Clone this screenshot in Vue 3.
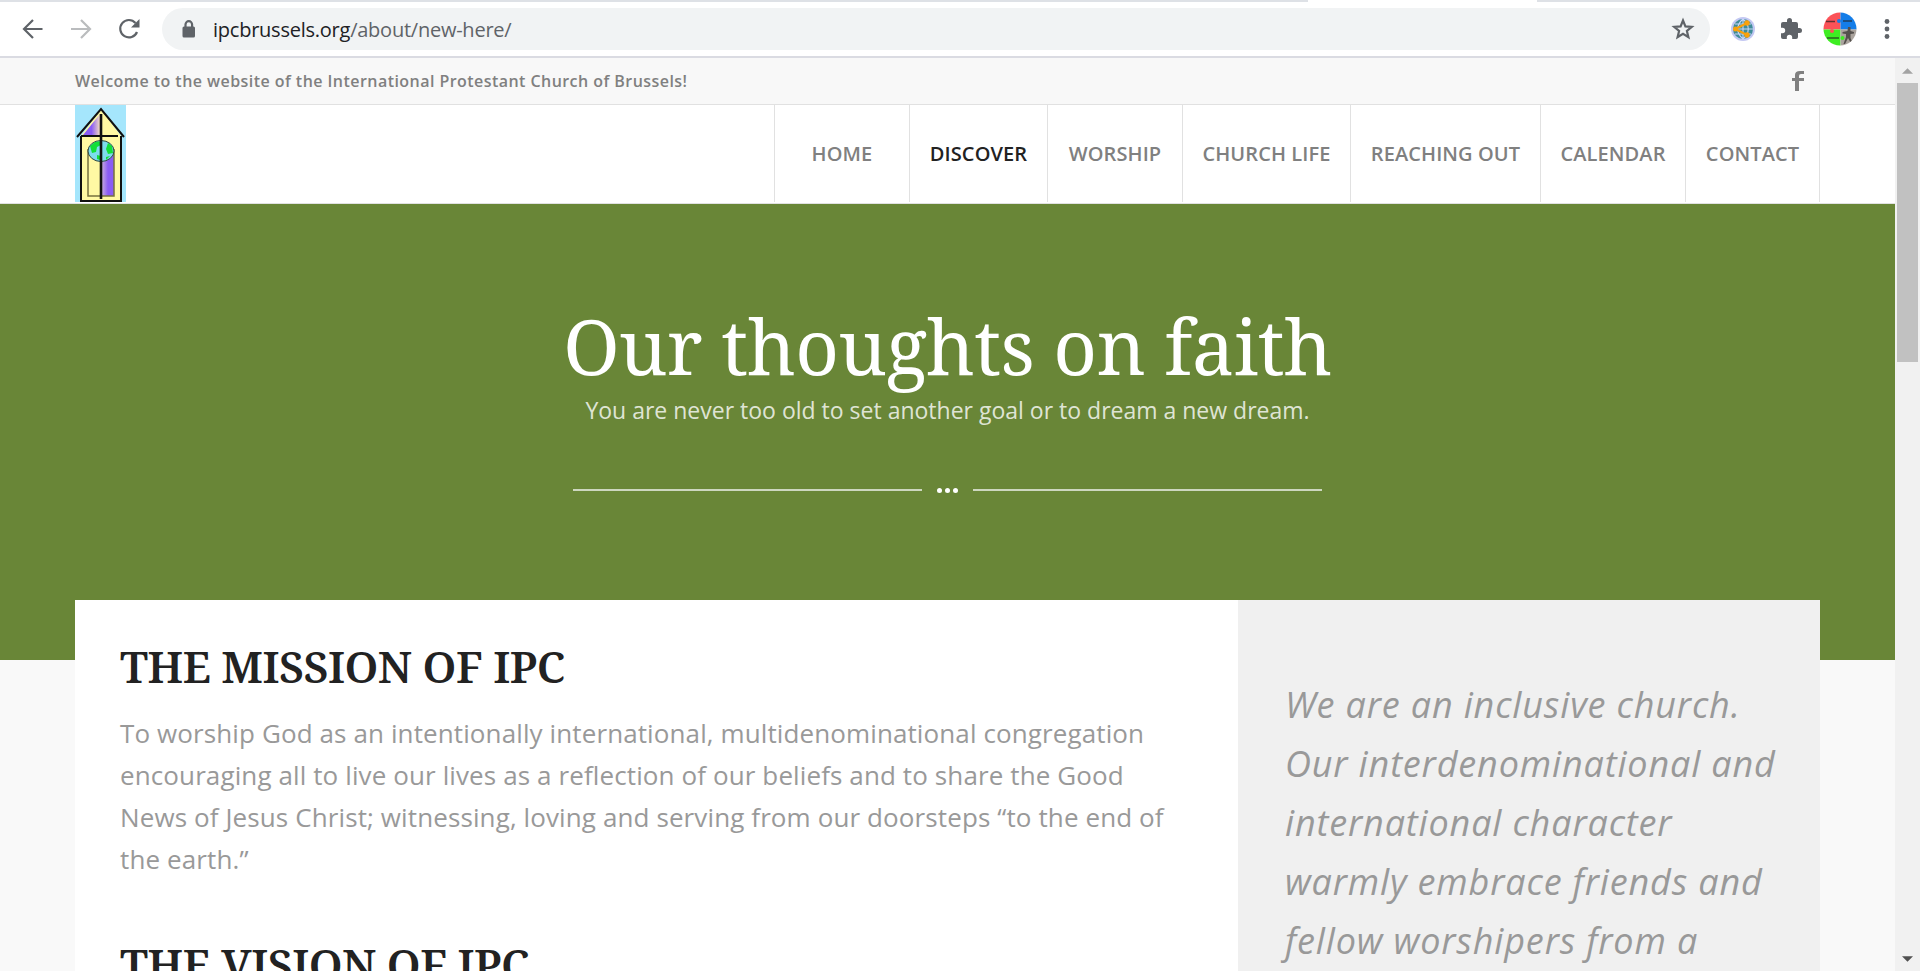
<template>
  <div class="browser">
    <div class="tabstrip">
      <div class="tabstrip__active"></div>
    </div>

    <div class="toolbar">
      <svg class="toolbar__back" viewBox="0 0 22 22"><path d="M20.500 11H2.500M11 2L2 11l9 9" /></svg>
      <svg class="toolbar__forward" viewBox="0 0 22 22"><path d="M1 11h18.500M11 2l9 9-9 9" /></svg>
      <svg class="toolbar__reload" viewBox="0 0 22 22">
        <path d="M19 14A8.700 8.700 0 1 1 17.500 5" />
        <path class="solid" d="M21.500 1v8.500H13z" />
      </svg>
      <div class="address">
        <svg class="address__lock" viewBox="0 0 14 18">
          <path class="solid" d="M2 6.500h9.500A1.500 1.500 0 0 1 13 8v8a1.500 1.500 0 0 1-1.500 1.500H2A1.500 1.500 0 0 1 .5 16V8A1.500 1.500 0 0 1 2 6.500z" />
          <path d="M3.500 8V4.500a3.300 3.300 0 0 1 6.600 0V8" />
        </svg>
        <span class="address__url"><b>ipcbrussels.org</b>/about/new-here/</span>
        <svg class="address__star" viewBox="0 0 24 24">
          <path d="M12 3.500l2.400 5.900 6.400.5-4.900 4.100 1.500 6.200L12 16.900l-5.400 3.300 1.500-6.200-4.900-4.100 6.400-.5z" />
        </svg>
      </div>
      <svg class="toolbar__globe" viewBox="0 0 24 24">
        <circle cx="12" cy="12" r="12" fill="#c3c8f3" />
        <circle cx="12" cy="12" r="10" fill="#3f8d98" />
        <path d="M12 2v20M2 12h20M4 7h16M4 17h16M12 2c-7 6-7 14 0 20M12 2c7 6 7 14 0 20" fill="none" stroke="#c9d6f8" stroke-width="1.100" />
        <path d="M16 6L4.500 12 16 18" fill="none" stroke="#f9a10c" stroke-width="2.200" />
        <circle cx="16" cy="6" r="2.700" fill="#f9a10c" />
        <circle cx="4.500" cy="12" r="2.500" fill="#f9a10c" />
        <circle cx="16" cy="18" r="2.700" fill="#f9a10c" />
      </svg>
      <svg class="toolbar__puzzle" viewBox="0 0 24 24">
        <path d="M20.500 11H19V7a2 2 0 0 0-2-2h-4V3.500a2.500 2.500 0 0 0-5 0V5H4a2 2 0 0 0-2 2v3.800h1.500a2.700 2.700 0 0 1 0 5.400H2V20a2 2 0 0 0 2 2h3.800v-1.500a2.700 2.700 0 0 1 5.400 0V22H17a2 2 0 0 0 2-2v-4h1.500a2.500 2.500 0 0 0 0-5z" />
      </svg>
      <svg class="toolbar__avatar" viewBox="0 0 34 34">
        <clipPath id="round"><circle cx="17" cy="17" r="16.500" /></clipPath>
        <g clip-path="url(#round)">
          <path d="M0 0h17.500v17.500H0z" fill="#fb5258" />
          <path d="M17.500 0H34v17.500H17.500z" fill="#147de8" />
          <path d="M0 17.500h17.500V34H0z" fill="#3eed22" />
          <path d="M17.500 17.500H34V34H17.500z" fill="#aaa39d" />
          <path d="M25 15h2.500v4l3.500 1v1.500l-3.500.5v4l2.500 6h-1.500l-3.500-6-3 6h-1.500l2.500-7v-3l-3.500-.5V20l5-1z" fill="#54504d" />
          <path d="M3 9.500h9M20 9h9M4 26h12" stroke="#222" stroke-opacity=".7" stroke-width="1.400" />
          <circle cx="9" cy="19" r="2" fill="#fb5258" />
          <circle cx="16" cy="9" r="2" fill="#147de8" />
          <circle cx="19.500" cy="26" r="2" fill="#3eed22" />
        </g>
      </svg>
      <svg class="toolbar__menu" viewBox="0 0 6 22">
        <circle cx="3" cy="3.500" r="2.400" />
        <circle cx="3" cy="11" r="2.400" />
        <circle cx="3" cy="18.500" r="2.400" />
      </svg>
    </div>

    <div class="viewport">
      <div class="page">
        <div class="welcome">
          <span>Welcome to the website of the International Protestant Church of Brussels!</span>
          <svg class="welcome__facebook" viewBox="0 0 12 20"><path d="M3 20V10H0V7h3V4q0-4 5-4h4v3H9Q7 3 7 5v2h5v3H7v10z" /></svg>
        </div>

        <header class="header">
          <svg class="header__logo" viewBox="0 0 51 97">
            <defs>
              <linearGradient id="roof"><stop offset=".5" stop-color="#8a5cf5" /><stop offset="1" stop-color="#f5dec0" /></linearGradient>
              <linearGradient id="door"><stop offset="0" stop-color="#c4a8df" /><stop offset=".5" stop-color="#8a5cf5" /></linearGradient>
            </defs>
            <path d="M0 0h51v97H0z" fill="#a5e6fc" />
            <path d="M6 31L26 4l20 27v65H6z" fill="#fff9a3" />
            <path d="M8 30L25 9v21z" fill="url(#roof)" />
            <path d="M27 45h12v46H27z" fill="url(#door)" />
            <path d="M13 44v47h26V44" fill="none" stroke="#77723f" stroke-width="1.500" />
            <ellipse cx="26" cy="46" rx="13" ry="10.500" fill="#7ddcec" stroke="#31483f" />
            <path d="M15 41l5-4 7-1-1 4-4 2-1 5-4 1zM33 38l4 3 1 7-5 1-2-5zM22 50l4 1-1 4-3-1zM31 52l4-1-4 4z" fill="#12df38" />
            <path d="M2 32L26 4l23 28M6 31h37M6 31v65h40V31" fill="none" stroke="#111" stroke-width="2" />
            <path d="M26 9v85" stroke="#111" stroke-width="2.600" />
          </svg>
          <nav class="nav">
            <a
              v-for="item in navItems"
              :key="item.label"
              class="nav__item"
              :class="{ 'nav__item--active': item.active }"
              :style="{ width: `${item.width}px` }"
            >{{ item.label }}</a>
          </nav>
        </header>

        <section class="hero">
          <h1 class="hero__title">Our thoughts on faith</h1>
          <p class="hero__subtitle">You are never too old to set another goal or to dream a new dream.</p>
          <div class="divider">
            <span class="divider__line"></span>
            <span class="divider__dots"><i></i><i></i><i></i></span>
            <span class="divider__line"></span>
          </div>
        </section>

        <main class="content">
          <article class="content__main">
            <h2>THE MISSION OF IPC</h2>
            <p>
              <span v-for="line in missionLines" :key="line">{{ line }}</span>
            </p>
            <h2>THE VISION OF IPC</h2>
          </article>
          <aside class="content__aside">
            <span v-for="line in asideLines" :key="line">{{ line }}</span>
          </aside>
        </main>
      </div>

      <div class="scrollbar">
        <svg class="scrollbar__arrow scrollbar__arrow--up" viewBox="0 0 12 6"><path d="M6 0l6 6H0z" /></svg>
        <div class="scrollbar__thumb"></div>
        <svg class="scrollbar__arrow scrollbar__arrow--down" viewBox="0 0 12 6"><path d="M0 0h12L6 6z" /></svg>
      </div>
    </div>
  </div>
</template>

<script setup>
  // width: 每个菜单项连同右侧分隔线的宽度。
  const navItems = [
    { label: 'HOME', width: 135 },
    { label: 'DISCOVER', width: 138, active: true },
    { label: 'WORSHIP', width: 135 },
    { label: 'CHURCH LIFE', width: 168 },
    { label: 'REACHING OUT', width: 190 },
    { label: 'CALENDAR', width: 145 },
    { label: 'CONTACT', width: 134 }
  ]

  const missionLines = [
    'To worship God as an intentionally international, multidenominational congregation',
    'encouraging all to live our lives as a reflection of our beliefs and to share the Good',
    'News of Jesus Christ; witnessing, loving and serving from our doorsteps “to the end of',
    'the earth.”'
  ]

  const asideLines = [
    'We are an inclusive church.',
    'Our interdenominational and',
    'international character',
    'warmly embrace friends and',
    'fellow worshipers from a'
  ]
</script>

<style>
  body {
    overflow: hidden;
  }
</style>

<style scoped>
  .browser {
    display: flex;
    flex-direction: column;
    width: 1920px;
    height: 971px;
    overflow: hidden;
    background: #fff;
    font-family: "Open Sans", "Noto Sans", sans-serif;
    white-space: nowrap;
  }

  .browser * {
    box-sizing: border-box;
  }

  .tabstrip {
    flex: none;
    height: 2px;
    padding-left: 1308px;
    background: #dee1e6;
  }

  .tabstrip__active {
    width: 229px;
    height: 2px;
    background: #fff;
  }

  .toolbar {
    flex: none;
    display: flex;
    align-items: center;
    height: 56px;
    padding: 0 0 0 22px;
    border-bottom: 2px solid #dadbe2;
  }

  .toolbar svg {
    flex: none;
    fill: none;
    stroke: #5f6368;
    stroke-width: 2.200;
  }

  .toolbar svg .solid {
    fill: #5f6368;
    stroke: none;
  }

  .toolbar .toolbar__back,
  .toolbar .toolbar__forward,
  .toolbar .toolbar__reload {
    width: 22px;
    height: 22px;
    margin-right: 26px;
  }

  .toolbar .toolbar__forward {
    stroke: #babcbe;
  }

  .toolbar .toolbar__reload {
    margin-right: 22px;
  }

  .address {
    display: flex;
    align-items: center;
    width: 1548px;
    height: 42px;
    padding: 0 15px 0 20px;
    border-radius: 21px;
    background: #f1f3f4;
  }

  .address__lock {
    width: 14px;
    height: 18px;
    margin-right: 17px;
  }

  .address__url {
    flex: 1;
    color: #5f6368;
    font-size: 20px;
    letter-spacing: -0.24px;
  }

  .address__url b {
    color: #202124;
    font-weight: 400;
  }

  .address__star {
    width: 24px;
    height: 24px;
  }

  .toolbar .toolbar__globe,
  .toolbar .toolbar__puzzle,
  .toolbar .toolbar__avatar,
  .toolbar .toolbar__menu {
    stroke: none;
  }

  .toolbar .toolbar__globe {
    width: 24px;
    height: 24px;
    margin-left: 21px;
  }

  .toolbar .toolbar__puzzle {
    width: 24px;
    height: 24px;
    margin-left: 24px;
    fill: #5f6368;
  }

  .toolbar .toolbar__avatar {
    width: 34px;
    height: 34px;
    margin-left: 20px;
  }

  .toolbar .toolbar__menu {
    width: 6px;
    height: 22px;
    margin-left: 27px;
    fill: #5f6368;
  }

  .viewport {
    flex: 1;
    display: flex;
    min-height: 0;
  }

  .page {
    width: 1895px;
    overflow: hidden;
    background: #f9f9f9;
  }

  .welcome {
    display: flex;
    align-items: center;
    justify-content: space-between;
    height: 47px;
    padding: 0 91px 0 75px;
    border-bottom: 1px solid #e1e1e1;
    background: #f8f8f8;
    color: #808080;
    font-size: 16px;
    font-weight: 600;
    letter-spacing: 0.45px;
  }

  .welcome__facebook {
    width: 12px;
    height: 20px;
    fill: #808080;
  }

  .header {
    display: flex;
    justify-content: space-between;
    height: 99px;
    padding: 0 75px;
    border-bottom: 1px solid #e1e1e1;
    background: #fff;
  }

  .header__logo {
    width: 51px;
    height: 97px;
  }

  .nav {
    display: flex;
    height: 97px;
    border-left: 1px solid #e1e1e1;
  }

  .nav__item {
    display: flex;
    align-items: center;
    justify-content: center;
    border-right: 1px solid #e1e1e1;
    color: #808080;
    font-size: 20px;
    font-weight: 600;
    letter-spacing: 0.1px;
  }

  .nav__item--active {
    color: #222;
  }

  .hero {
    display: flex;
    flex-direction: column;
    align-items: center;
    height: 456px;
    padding-top: 95px;
    background: #698637;
    color: #fff;
  }

  .hero__title {
    margin: 0;
    font-family: "Noto Serif", "DejaVu Serif", serif;
    font-size: 76px;
    font-weight: 400;
    letter-spacing: -0.55px;
    line-height: 94px;
  }

  .hero__subtitle {
    margin: 0;
    color: rgba(255, 255, 255, 0.8);
    font-size: 23px;
    font-weight: 400;
    line-height: 34px;
  }

  .divider {
    display: flex;
    align-items: center;
    margin-top: 59px;
  }

  .divider__line {
    width: 349px;
    height: 2px;
    background: #cdd7bf;
  }

  .divider__dots {
    display: flex;
    gap: 3px;
    margin: 2px 15px 0;
  }

  .divider__dots i {
    width: 5px;
    height: 5px;
    border-radius: 50%;
    background: #fff;
  }

  .content {
    position: relative;
    display: flex;
    height: 600px;
    margin: -60px 75px 0;
    background: #fff;
  }

  .content__main {
    width: 1163px;
    padding: 40px 45px 0;
  }

  .content__main h2 {
    margin: 0;
    color: #222;
    font-family: "Noto Serif", "DejaVu Serif", serif;
    font-size: 44px;
    font-weight: 600;
    letter-spacing: -0.5px;
    line-height: 52px;
  }

  .content__main p {
    display: flex;
    flex-direction: column;
    margin: 20px 0 58px;
    color: #999;
    font-size: 26px;
    letter-spacing: 0.11px;
    line-height: 42px;
  }

  .content__aside {
    display: flex;
    flex-direction: column;
    width: 582px;
    padding: 75px 0 0 47px;
    background: #f0f0f0;
    color: #999;
    font-size: 36px;
    font-style: italic;
    letter-spacing: 0.84px;
    line-height: 59px;
  }

  .scrollbar {
    display: flex;
    flex-direction: column;
    align-items: center;
    width: 25px;
    background: #f1f1f1;
  }

  .scrollbar__arrow {
    width: 11px;
    height: 6px;
    margin-top: 10px;
    fill: #a3a3a3;
  }

  .scrollbar__thumb {
    width: 21px;
    height: 279px;
    margin-top: 9px;
    background: #c1c1c1;
  }

  .scrollbar__arrow--down {
    margin: auto 0 9px;
    fill: #505050;
  }
</style>
